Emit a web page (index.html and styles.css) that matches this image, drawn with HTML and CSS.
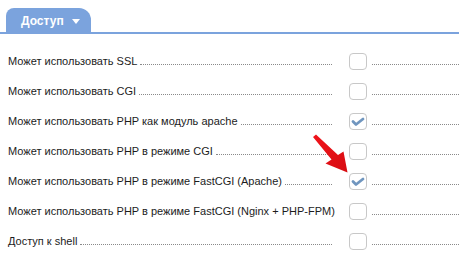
FILE: index.html
```html
<!DOCTYPE html>
<html lang="ru">
<head>
  <meta charset="UTF-8" />
  <title>Доступ</title>
  <link rel="stylesheet" href="styles.css">
</head>
<body>
  <div class="tabs">
    <div class="tab">Доступ <span class="caret"></span></div>
  </div>

  <div class="perms">
    <div class="row">
      <div class="label"><span>Может использовать SSL</span></div>
      <span class="box"></span>
      <span class="tail"></span>
    </div>
    <div class="row">
      <div class="label"><span>Может использовать CGI</span></div>
      <span class="box"></span>
      <span class="tail"></span>
    </div>
    <div class="row">
      <div class="label"><span>Может использовать PHP как модуль apache</span></div>
      <span class="box checked">
        <svg viewBox="0 0 18 18" width="18" height="18"><path d="M4 8.5 L7 11.5 L14 6" /></svg>
      </span>
      <span class="tail"></span>
    </div>
    <div class="row">
      <div class="label"><span>Может использовать PHP в режиме CGI</span></div>
      <span class="box"></span>
      <span class="tail"></span>
    </div>
    <div class="row">
      <div class="label"><span>Может использовать PHP в режиме FastCGI (Apache)</span></div>
      <span class="box checked">
        <svg viewBox="0 0 18 18" width="18" height="18"><path d="M4 8.5 L7 11.5 L14 6" /></svg>
      </span>
      <span class="tail"></span>
    </div>
    <div class="row">
      <div class="label"><span>Может использовать PHP в режиме FastCGI (Nginx + PHP-FPM)</span></div>
      <span class="box"></span>
      <span class="tail"></span>
    </div>
    <div class="row">
      <div class="label"><span>Доступ к shell</span></div>
      <span class="box"></span>
      <span class="tail"></span>
    </div>

    <!-- red pointer drawn over the list -->
    <svg class="pointer" viewBox="0 0 40 42" width="40" height="42">
      <defs>
        <linearGradient id="red" x1="0" y1="0" x2="1" y2="1">
          <stop offset="0" stop-color="#f0141b" />
          <stop offset="1" stop-color="#d70d12" />
        </linearGradient>
      </defs>
      <path d="M1 3 L4 0.5 L26 21 L31.5 17.5 L35.5 38.5 L13.5 29.5 L19.5 25.5 Z" fill="url(#red)" />
    </svg>
  </div>
</body>
</html>
```

FILE: styles.css
```css
body {
  margin: 0;
  background: #fff;
  font-family: "Liberation Sans", Arial, sans-serif;
  color: #1c1c1c;
  overflow: hidden;
}

.tabs {
  padding: 8px 0 0 6px;
  border-bottom: 2px solid #7ba3dd;
}

.tab {
  display: inline-flex;
  align-items: center;
  gap: 8px;
  width: 85px;
  height: 24px;
  box-sizing: border-box;
  padding: 1px 0 0 15px;
  background: #7ba3dd;
  border-radius: 8px 12px 0 0;
  color: #fff;
  font-size: 12px;
  font-weight: bold;
}

.caret {
  width: 0;
  height: 0;
  border-left: 4.5px solid transparent;
  border-right: 4.5px solid transparent;
  border-top: 5px solid #fff;
  margin-top: 2px;
}

.perms {
  position: relative;
  padding: 12px 0 0 8px;
}

.row {
  display: flex;
  align-items: center;
  height: 30px;
  font-size: 11px;
}

.label {
  display: flex;
  align-items: baseline;
  width: 324px;
  flex: none;
  white-space: nowrap;
}

.label::after {
  content: "";
  flex: 1;
  margin-left: 3px;
  border-bottom: 1px dotted #8a8a8a;
}

.box {
  flex: none;
  width: 18px;
  height: 17px;
  box-sizing: border-box;
  margin-left: 17px;
  border: 1px solid #c8c8c8;
  border-radius: 4px;
  background: #fff;
}

.box svg {
  display: block;
  margin: -1px 0 0 -1px;
}

.box path {
  fill: none;
  stroke: #7096bf;
  stroke-width: 2.8;
  stroke-linecap: round;
  stroke-linejoin: round;
}

.tail {
  flex: 1;
  height: 0;
  margin: 7px 0 0 5px;
  border-bottom: 1px dotted #8a8a8a;
}

.pointer {
  position: absolute;
  left: 312px;
  top: 100px;
}
```
